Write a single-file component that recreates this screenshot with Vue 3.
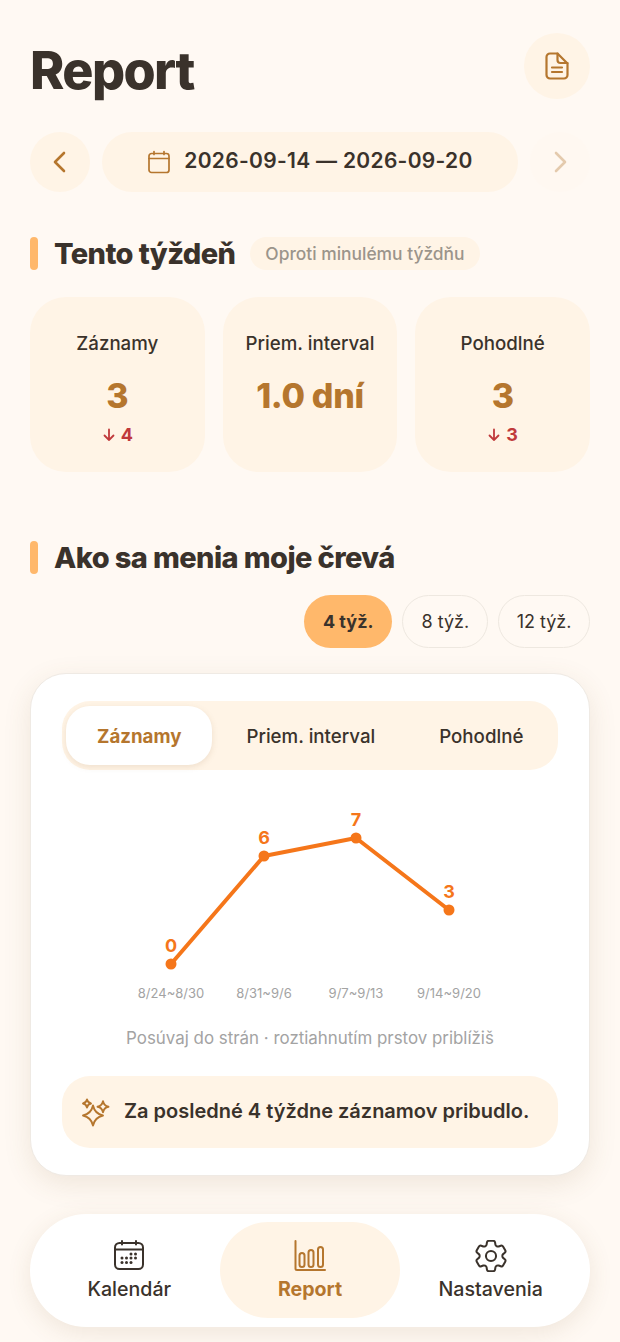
<script setup>
const stats = [
  { label: 'Záznamy', value: '3', delta: '4' },
  { label: 'Priem. interval', value: '1.0 dní', delta: '' },
  { label: 'Pohodlné', value: '3', delta: '3' },
];
const ranges = [
  { label: '4 týž.', active: true },
  { label: '8 týž.', active: false },
  { label: '12 týž.', active: false },
];
const tabs = [
  { label: 'Záznamy', active: true },
  { label: 'Priem. interval', active: false },
  { label: 'Pohodlné', active: false },
];
const points = [
  { x: 171, y: 964, value: 0, week: '8/24~8/30' },
  { x: 264, y: 856, value: 6, week: '8/31~9/6' },
  { x: 356, y: 838, value: 7, week: '9/7~9/13' },
  { x: 449, y: 910, value: 3, week: '9/14~9/20' },
];
const linePoints = points.map((p) => `${p.x},${p.y}`).join(' ');
const dots = [
  [17, 14], [21.5, 14],
  [8, 18], [12.5, 18], [17, 18], [21.5, 18],
  [8, 22.5], [12.5, 22.5], [17, 22.5],
];

// four pointed star for the insight icon
function star(cx, cy, r) {
  const k = r * 0.18;
  return `M${cx} ${cy - r}Q${cx + k} ${cy - k} ${cx + r} ${cy}Q${cx + k} ${cy + k} ${cx} ${cy + r}Q${cx - k} ${cy + k} ${cx - r} ${cy}Q${cx - k} ${cy - k} ${cx} ${cy - r}Z`;
}
const stars = [star(13, 18.5, 10), star(23, 9.7, 5.5), star(7, 6.5, 4)];
</script>

<template>
  <div class="page">
    <header class="top">
      <h1 class="title">Report</h1>
      <button class="doc-btn">
        <svg width="28" height="28" viewBox="0 0 28 28" class="stroke-icon">
          <path d="M7 1.5h7.5l10 10V23a3.5 3.5 0 0 1-3.5 3.5H7A3.5 3.5 0 0 1 3.5 23V5A3.5 3.5 0 0 1 7 1.5z" />
          <path d="M14.5 1.5V8a3 3 0 0 0 3 3h7" />
          <path d="M9 15.5h10M9 20h10" />
        </svg>
      </button>
    </header>

    <div class="week-row">
      <button class="arrow">
        <svg width="24" height="24" viewBox="0 0 24 24" class="chevron">
          <path d="M16 3 L7 12 L16 21" />
        </svg>
      </button>
      <div class="week-pill">
        <svg width="24" height="24" viewBox="0 0 24 24" class="stroke-icon thin">
          <rect x="2" y="3.5" width="20" height="19" rx="2.5" />
          <path d="M2 8.5h20M7 1.5v3M17 1.5v3" />
        </svg>
        <span>2026-09-14 — 2026-09-20</span>
      </div>
      <button class="arrow disabled">
        <svg width="24" height="24" viewBox="0 0 24 24" class="chevron">
          <path d="M8 3 L17 12 L8 21" />
        </svg>
      </button>
    </div>

    <div class="section-head first">
      <span class="bar"></span>
      <h2>Tento týždeň</h2>
      <span class="note">Oproti minulému týždňu</span>
    </div>

    <div class="stats">
      <div v-for="s in stats" :key="s.label" class="stat">
        <div class="stat-label">{{ s.label }}</div>
        <div class="stat-value">{{ s.value }}</div>
        <div v-if="s.delta" class="stat-delta">
          <svg width="14" height="14" viewBox="0 0 14 14" class="delta-arrow">
            <path d="M7 1.5v10.5M2.5 7.5 7 12l4.5-4.5" />
          </svg>
          {{ s.delta }}
        </div>
      </div>
    </div>

    <div class="section-head second">
      <span class="bar"></span>
      <h2>Ako sa menia moje črevá</h2>
    </div>

    <div class="ranges">
      <button v-for="r in ranges" :key="r.label" class="range" :class="{ active: r.active }">
        {{ r.label }}
      </button>
    </div>

    <section class="card">
      <div class="tabs">
        <button v-for="t in tabs" :key="t.label" class="tab" :class="{ active: t.active }">
          {{ t.label }}
        </button>
      </div>

      <svg class="chart" width="496" height="230" viewBox="62 790 496 230">
        <polyline :points="linePoints" class="line" />
        <g v-for="p in points" :key="p.week">
          <circle :cx="p.x" :cy="p.y" r="5.5" class="dot" />
          <text :x="p.x" :y="p.y - 12" class="point-label">{{ p.value }}</text>
          <text :x="p.x" y="998" class="week-label">{{ p.week }}</text>
        </g>
      </svg>

      <p class="hint">Posúvaj do strán · roztiahnutím prstov priblížiš</p>

      <div class="insight">
        <svg width="30" height="30" viewBox="0 0 30 30" class="stroke-icon sparkle">
          <path v-for="d in stars" :key="d" :d="d" />
        </svg>
        <span>Za posledné 4 týždne záznamov pribudlo.</span>
      </div>
    </section>

    <nav class="nav">
      <div class="nav-item">
        <svg width="30" height="32" viewBox="0 0 30 32" class="nav-icon">
          <rect x="1" y="3" width="28" height="26" rx="4.5" />
          <path d="M1 9.500h28M8 1v3.500M22 1v3.500" />
          <circle v-for="d in dots" :key="d.join()" :cx="d[0]" :cy="d[1]" r="1.500" class="nav-dot" />
        </svg>
        <span>Kalendár</span>
      </div>
      <div class="nav-item active">
        <svg width="32" height="32" viewBox="0 0 32 32" class="nav-icon">
          <path d="M1.500 1v27.500a1.500 1.500 0 0 0 1.500 1.500h28" />
          <rect x="5.500" y="13" width="5" height="14" rx="2.500" />
          <rect x="14.500" y="10" width="5" height="17" rx="2.500" />
          <rect x="24" y="7" width="5" height="20" rx="2.500" />
        </svg>
        <span>Report</span>
      </div>
      <div class="nav-item">
        <svg width="32" height="32" viewBox="2.500 2.500 19 19" class="nav-icon gear">
          <path d="M9.594 3.94c.09-.542.56-.94 1.11-.94h2.593c.55 0 1.02.398 1.11.94l.213 1.281c.063.374.313.686.645.87.074.04.147.083.22.127.325.196.72.257 1.075.124l1.217-.456a1.125 1.125 0 0 1 1.37.49l1.296 2.247a1.125 1.125 0 0 1-.26 1.431l-1.003.827c-.293.241-.438.613-.43.992a7.723 7.723 0 0 1 0 .255c-.008.378.137.75.43.991l1.004.827c.424.35.534.955.26 1.43l-1.298 2.247a1.125 1.125 0 0 1-1.369.491l-1.217-.456c-.355-.133-.75-.072-1.076.124a6.47 6.47 0 0 1-.22.128c-.331.183-.581.495-.644.869l-.213 1.281c-.09.543-.56.94-1.11.94h-2.594c-.55 0-1.019-.398-1.11-.94l-.213-1.281c-.062-.374-.312-.686-.644-.87a6.52 6.52 0 0 1-.22-.127c-.325-.196-.72-.257-1.076-.124l-1.217.456a1.125 1.125 0 0 1-1.369-.49l-1.297-2.247a1.125 1.125 0 0 1 .26-1.431l1.004-.827c.292-.24.437-.613.43-.991a6.932 6.932 0 0 1 0-.255c.007-.38-.138-.751-.43-.992l-1.004-.827a1.125 1.125 0 0 1-.26-1.43l1.297-2.247a1.125 1.125 0 0 1 1.37-.491l1.216.456c.356.133.751.072 1.076-.124.072-.044.146-.086.22-.128.332-.183.582-.495.644-.869l.214-1.28Z" />
          <circle cx="12" cy="12" r="3" />
        </svg>
        <span>Nastavenia</span>
      </div>
    </nav>
  </div>
</template>

<style>
body {
  background: #fff9f3;
}
</style>

<style scoped>
.page {
  box-sizing: border-box;
  width: 620px;
  height: 1342px;
  overflow: hidden;
  padding: 33px 30px 0;
  background: #fff9f3;
  color: #3a322b;
  font-family: Inter, "Liberation Sans", sans-serif;
}
button {
  border: none;
  padding: 0;
  font-family: inherit;
  color: inherit;
}
.top {
  display: flex;
  justify-content: space-between;
  align-items: center;
  height: 66px;
}
.title {
  margin: 0;
  padding-top: 10px;
  font-size: 52px;
  font-weight: 800;
  letter-spacing: -1.6px;
  line-height: 66px;
}
.doc-btn {
  display: flex;
  align-items: center;
  justify-content: center;
  width: 66px;
  height: 66px;
  border-radius: 50%;
  background: #fff4e6;
}
.stroke-icon {
  fill: none;
  stroke: #b5762e;
  stroke-width: 2.2;
  stroke-linejoin: round;
  stroke-linecap: round;
}
.stroke-icon.thin {
  stroke-width: 1.7;
}
.stroke-icon.sparkle {
  stroke-width: 1.9;
}
.week-row {
  display: flex;
  align-items: center;
  gap: 12px;
  margin-top: 33px;
}
.arrow {
  display: flex;
  align-items: center;
  justify-content: center;
  flex: none;
  width: 60px;
  height: 60px;
  border-radius: 50%;
  background: #fff4e6;
}
.arrow.disabled {
  opacity: 0.35;
  background: #fff8f0;
}
.chevron {
  fill: none;
  stroke: #b5762e;
  stroke-width: 2.6;
  stroke-linecap: round;
  stroke-linejoin: round;
}
.week-pill {
  flex: 1;
  display: flex;
  align-items: center;
  justify-content: center;
  gap: 13px;
  height: 60px;
  border-radius: 30px;
  background: #fff4e6;
  font-size: 21px;
  font-weight: 600;
  letter-spacing: 0.3px;
}
.week-pill span {
  padding-bottom: 3px;
}
.section-head {
  display: flex;
  align-items: center;
  height: 33px;
}
.section-head.first {
  margin-top: 45px;
}
.section-head.second {
  margin-top: 69px;
}
.bar {
  width: 8px;
  height: 33px;
  border-radius: 4px;
  background: #ffb86b;
  margin-right: 16px;
}
.section-head h2 {
  margin: 0;
  font-size: 29px;
  font-weight: 800;
  letter-spacing: -0.6px;
}
.note {
  margin-left: 15px;
  padding: 0 15px;
  height: 33px;
  line-height: 33px;
  border-radius: 17px;
  background: #fff4e6;
  color: #9b948b;
  font-size: 17.4px;
  font-weight: 500;
}
.stats {
  display: grid;
  grid-template-columns: repeat(3, 1fr);
  gap: 18px;
  margin-top: 27px;
}
.stat {
  height: 175px;
  box-sizing: border-box;
  padding-top: 35px;
  border-radius: 36px;
  background: #fff4e6;
  text-align: center;
}
.stat-label {
  font-size: 18.7px;
  font-weight: 500;
  line-height: 24px;
}
.stat-value {
  margin-top: 18px;
  font-size: 34px;
  font-weight: 800;
  letter-spacing: -0.3px;
  line-height: 44px;
  color: #b5762e;
}
.stat-delta {
  display: flex;
  align-items: center;
  justify-content: center;
  gap: 5px;
  margin-top: 6px;
  font-size: 18px;
  font-weight: 700;
  line-height: 22px;
  color: #c0393b;
}
.delta-arrow {
  fill: none;
  stroke: #c0393b;
  stroke-width: 1.8;
  stroke-linecap: round;
  stroke-linejoin: round;
}
.ranges {
  display: flex;
  justify-content: flex-end;
  gap: 10px;
  margin-top: 21px;
}
.range {
  box-sizing: border-box;
  height: 53px;
  padding: 0 18px;
  border: 1.5px solid #eee8e0;
  border-radius: 27px;
  background: transparent;
  font-size: 18px;
  font-weight: 400;
}
.range:last-child {
  padding: 0 17.5px;
}
.range.active {
  padding: 0 19px;
  border: none;
  background: #ffb86b;
  font-weight: 700;
}
.card {
  box-sizing: border-box;
  height: 503px;
  margin-top: 25px;
  padding: 27px 31px;
  border: 1px solid #efeae4;
  border-radius: 36px;
  background: #fff;
  box-shadow: 0 8px 28px rgba(120, 90, 50, 0.12);
}
.tabs {
  display: flex;
  gap: 4px;
  box-sizing: border-box;
  height: 69px;
  padding: 5px 4px;
  border-radius: 28px;
  background: #fff4e6;
}
.tab {
  flex: none;
  padding: 2px 30px 0;
  border-radius: 24px;
  background: transparent;
  font-size: 18.7px;
  font-weight: 500;
  white-space: nowrap;
}
.tab.active {
  padding: 2px 31px 0;
  background: #fff;
  color: #b5762e;
  font-weight: 700;
  box-shadow: 0 2px 6px rgba(150, 110, 60, 0.15);
}
.chart {
  display: block;
  margin-top: 20px;
}
.line {
  fill: none;
  stroke: #f5761a;
  stroke-width: 4;
  stroke-linejoin: round;
}
.dot {
  fill: #f5761a;
}
.point-label {
  fill: #f5761a;
  font-size: 18px;
  font-weight: 700;
  text-anchor: middle;
}
.week-label {
  fill: #a3a3a3;
  font-size: 13px;
  text-anchor: middle;
}
.hint {
  margin: 6px 0 0;
  color: #a3a3a3;
  font-size: 16.9px;
  line-height: 24px;
  text-align: center;
}
.insight {
  display: flex;
  align-items: center;
  gap: 14px;
  height: 72px;
  margin-top: 26px;
  padding-left: 18px;
  border-radius: 28px;
  background: #fff4e6;
  font-size: 20px;
  font-weight: 600;
}
.insight span {
  padding-bottom: 2px;
}
.nav {
  display: grid;
  grid-template-columns: repeat(3, 1fr);
  box-sizing: border-box;
  height: 113px;
  margin-top: 38px;
  padding: 8px 9px 9px;
  border-radius: 57px;
  background: #fff;
  box-shadow: 0 6px 24px rgba(120, 90, 50, 0.12);
}
.nav-item {
  display: flex;
  flex-direction: column;
  align-items: center;
  justify-content: center;
  gap: 5px;
  border-radius: 48px;
  font-size: 19.6px;
  font-weight: 500;
}
.nav-item.active {
  background: #fff4e6;
  color: #b5762e;
  font-weight: 700;
}
.nav-icon {
  fill: none;
  stroke: #3a322b;
  stroke-width: 2;
  stroke-linejoin: round;
  stroke-linecap: round;
}
.nav-icon.gear {
  stroke-width: 1.2;
}
.nav-item.active .nav-icon {
  stroke: #b5762e;
}
.nav-dot {
  fill: #3a322b;
  stroke: none;
}
</style>
